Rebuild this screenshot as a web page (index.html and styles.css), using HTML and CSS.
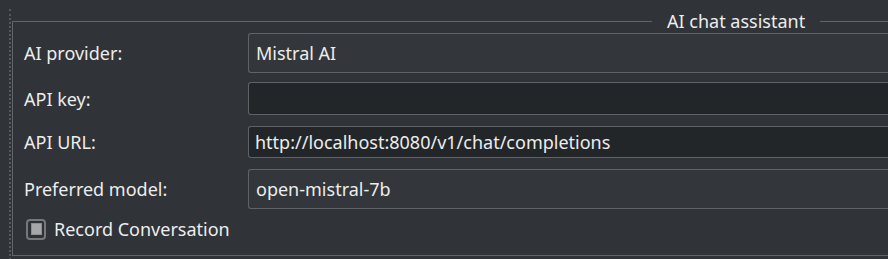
FILE: index.html
```html
<!DOCTYPE html>
<html lang="en">
<head>
<meta charset="utf-8">
<title>AI chat assistant</title>
<link rel="stylesheet" href="styles.css">
</head>
<body>
<div class="page">
  <fieldset class="group">
    <legend class="group-title">AI chat assistant</legend>
    <div class="row row-provider">
      <span class="label">AI provider:</span>
      <div class="combo">Mistral AI</div>
    </div>
    <div class="row row-key">
      <span class="label">API key:</span>
      <div class="input input-key"></div>
    </div>
    <div class="row row-url">
      <span class="label">API URL:</span>
      <div class="input input-url">http://localhost:8080/v1/chat/completions</div>
    </div>
    <div class="row row-model">
      <span class="label">Preferred model:</span>
      <div class="combo">open-mistral-7b</div>
    </div>
    <label class="check">
      <span class="check-box"><span class="check-mark"></span></span>
      <span class="check-text">Record Conversation</span>
    </label>
  </fieldset>
</div>
</body>
</html>
```

FILE: styles.css
```css
html, body {
  margin: 0;
  height: 100%;
  background: #303337;
  overflow: hidden;
}

body {
  font-family: "Noto Sans", "DejaVu Sans", sans-serif;
  font-size: 18px;
  color: #eceded;
}

.page {
  margin-left: 9px;
  border-left: 2px dotted #55585c;
  padding-left: 1px;
  height: 259px;
  box-sizing: border-box;
}

.group {
  margin: 9px 0 0 0;
  box-sizing: border-box;
  border: 1px solid #616468;
  border-right: none;
  padding: 0 0 14px 11px;
  min-width: 0;
}

.group-title {
  margin-left: 628px;
  padding: 0 15px;
  line-height: 24px;
}

.row {
  display: flex;
  align-items: center;
}

.label {
  width: 224px;
  flex: none;
  line-height: 24px;
}

.row-key { margin-top: 9px; }
.row-url { margin-top: 11px; }
.row-model { margin-top: 11px; }

.combo,
.input {
  flex: 1;
  min-width: 0;
  box-sizing: border-box;
  border: 1px solid #5f6266;
  border-right: none;
  border-radius: 3px 0 0 3px;
  display: flex;
  align-items: center;
  white-space: nowrap;
  overflow: hidden;
}

.combo {
  height: 40px;
  background: #33363a;
  padding-left: 7px;
}

.input {
  background: #232629;
  padding-left: 6px;
}

.input-key { height: 33px; }
.input-url { height: 32px; }

.check {
  display: flex;
  align-items: center;
  margin-top: 8px;
  line-height: 24px;
}

.check-box {
  width: 20px;
  height: 21px;
  margin-left: 2px;
  margin-right: 8px;
  box-sizing: border-box;
  border: 2px solid #76797c;
  border-radius: 4px;
  background: #2e3135;
  display: flex;
  align-items: center;
  justify-content: center;
}

.check-mark {
  width: 11px;
  height: 12px;
  background: #a6a7a9;
  border: 1px solid #8c8e90;
  box-sizing: border-box;
}
```
